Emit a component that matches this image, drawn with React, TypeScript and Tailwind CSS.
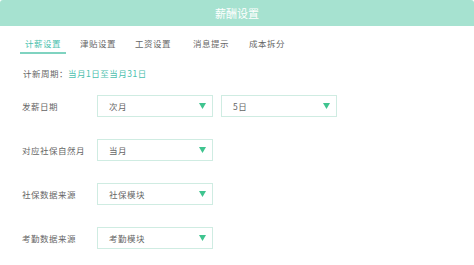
import * as React from 'react';

const font = { fontFamily: '"Noto Sans CJK SC", "Noto Sans", sans-serif' };

// tab spacing in the design is not perfectly even
const tabs = [
  { name: '计薪设置', cls: '' },
  { name: '津贴设置', cls: 'ml-[9px]' },
  { name: '工资设置', cls: 'ml-[9px]' },
  { name: '消息提示', cls: 'ml-[12px]' },
  { name: '成本拆分', cls: 'ml-[10px]' },
];

const Select: React.FC<{ value: string }> = ({ value }) => (
  <div className="w-[116px] h-[22px] border border-[#cfece2] flex items-center justify-between pl-[11px] pr-[6px] text-[8.5px] tracking-[0.5px] text-[#666]">
    <span>{value}</span>
    <svg width="7" height="6" viewBox="0 0 7 6">
      <polygon points="0,0 7,0 3.5,6" fill="#3fc48f" />
    </svg>
  </div>
);

const rows: { label: string; values: string[] }[] = [
  { label: '发薪日期', values: ['次月', '5日'] },
  { label: '对应社保自然月', values: ['当月'] },
  { label: '社保数据来源', values: ['社保模块'] },
  { label: '考勤数据来源', values: ['考勤模块'] },
];

export default function App() {
  return (
    <div className="w-[474px] h-[265px] bg-white overflow-hidden" style={font}>
      <div className="h-[26px] bg-[#a6e2d0] rounded-t-[3px] flex items-center justify-center text-white text-[11px]">
        薪酬设置
      </div>
      <div className="px-[20px]">
        {/* tabs */}
        <div className="flex pt-[11px]">
          {tabs.map((tab, idx) => (
            <div
              key={tab.name}
              className={`${tab.cls} px-[5px] pb-[3px] text-[8.5px] leading-[12px] tracking-[0.5px] border-b-2 ${
                idx === 0 ? 'text-[#4bbfae] border-[#7fd3c0]' : 'text-[#666] border-transparent'
              }`}
            >
              {tab.name}
            </div>
          ))}
        </div>
        <div className="mt-[13px] pl-[3px] text-[8.5px] leading-[12px] tracking-[0.5px] text-[#666]">
          计新周期：<span className="text-[#4bbfae]">当月1日至当月31日</span>
        </div>
        <div className="mt-[16px] flex flex-col gap-[22px]">
          {rows.map(row => (
            <div key={row.label} className="flex items-center">
              <div className="w-[77px] pl-[2px] text-[8.5px] tracking-[0.5px] text-[#666]">{row.label}</div>
              <div className="flex gap-[8px]">
                {row.values.map(v => (
                  <Select key={v} value={v} />
                ))}
              </div>
            </div>
          ))}
        </div>
      </div>
    </div>
  );
}
